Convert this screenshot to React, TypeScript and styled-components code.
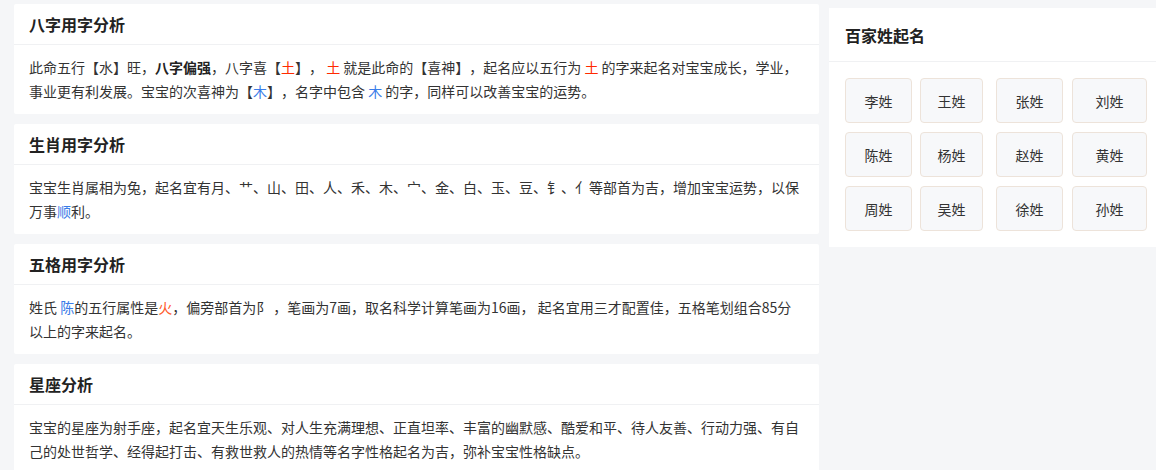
import React from 'react';
import styled, { createGlobalStyle } from 'styled-components';

const GlobalStyle = createGlobalStyle`
  html, body {
    margin: 0;
    padding: 0;
    overflow: hidden;
    background: #f5f6f8;
  }
  body {
    font-family: "Noto Sans CJK SC", "Noto Sans", sans-serif;
    color: #333;
    text-spacing-trim: space-all;
  }
`;

type Tone = 'red' | 'blue' | 'orange';

const toneColors: Record<Tone, string> = {
  red: '#ff2a00',
  blue: '#3a7ce8',
  orange: '#ff5a2c',
};

const surnames = [
  '李姓', '王姓', '张姓', '刘姓',
  '陈姓', '杨姓', '赵姓', '黄姓',
  '周姓', '吴姓', '徐姓', '孙姓',
];

const columnWidths = [67, 63, 67, 75];

const App = (): JSX.Element => (
  <Page>
    <GlobalStyle />
    <MainColumn>
      <Card>
        <CardHeader>八字用字分析</CardHeader>
        <CardBody>
          此命五行【水】旺，<Strong>八字偏强</Strong>，八字喜【<Hl tone="red">土</Hl>】，
          <Hl tone="red"> 土 </Hl>就是此命的【喜神】，起名应以五行为<Hl tone="red"> 土 </Hl>
          的字来起名对宝宝成长，学业，事业更有利发展。宝宝的次喜神为【<Hl tone="blue">木</Hl>】，名字中包含
          <Hl tone="blue"> 木 </Hl>的字，同样可以改善宝宝的运势。
        </CardBody>
      </Card>

      <Card>
        <CardHeader>生肖用字分析</CardHeader>
        <CardBody>
          宝宝生肖属相为兔，起名宜有月、艹、山、田、人、禾、木、宀、金、白、玉、豆、钅、亻等部首为吉，增加宝宝运势，以保万事<Hl tone="blue">顺</Hl>利。
        </CardBody>
      </Card>

      <Card>
        <CardHeader>五格用字分析</CardHeader>
        <CardBody>
          姓氏 <Hl tone="blue">陈</Hl>的五行属性是<Hl tone="orange">火</Hl>，偏旁部首为阝 ，笔画为7画，取名科学计算笔画为16画，
          起名宜用三才配置佳，五格笔划组合85分以上的字来起名。
        </CardBody>
      </Card>

      <Card>
        <CardHeader>星座分析</CardHeader>
        <CardBody>
          宝宝的星座为射手座，起名宜天生乐观、对人生充满理想、正直坦率、丰富的幽默感、酷爱和平、待人友善、行动力强、有自己的处世哲学、经得起打击、有救世救人的热情等名字性格起名为吉，弥补宝宝性格缺点。
        </CardBody>
      </Card>
    </MainColumn>

    <SideCard>
      <SideHeader>百家姓起名</SideHeader>
      <SurnameGrid>
        {surnames.map((name, i) => (
          <SurnameButton key={name} $width={columnWidths[i % 4]}>
            {name}
          </SurnameButton>
        ))}
      </SurnameGrid>
    </SideCard>
  </Page>
);

const Page = styled.div`
  display: flex;
  align-items: flex-start;
  gap: 10px;
  padding: 4px 0 0 14px;
  width: 1200px;
`;

const MainColumn = styled.div`
  display: flex;
  flex-direction: column;
  gap: 10px;
  width: 805px;
  flex-shrink: 0;
`;

const Card = styled.section`
  background: #fff;
  border-radius: 2px;
`;

const CardHeader = styled.h3`
  margin: 0;
  height: 40px;
  padding: 0 15px;
  display: flex;
  align-items: center;
  font-size: 16px;
  font-weight: 700;
  color: #222;
  border-bottom: 1px solid #f0f1f3;
`;

const CardBody = styled.p`
  margin: 0;
  padding: 10px 15px 11px;
  font-size: 14px;
  line-height: 24px;
  color: #333;
`;

const Strong = styled.b`
  font-weight: 700;
  color: #222;
`;

const Hl = styled.span<{ tone: Tone }>`
  color: ${({ tone }) => toneColors[tone]};
`;

const SideCard = styled.aside`
  margin-top: 4px;
  width: 340px;
  flex-shrink: 0;
  background: #fff;
  padding-bottom: 16px;
`;

const SideHeader = styled.h3`
  margin: 0;
  height: 53px;
  padding: 0 16px;
  display: flex;
  align-items: center;
  font-size: 16px;
  font-weight: 600;
  color: #222;
  border-bottom: 1px solid #f0f1f3;
`;

const SurnameGrid = styled.div`
  display: grid;
  grid-template-columns: 75px 76px 76px 76px;
  row-gap: 9px;
  padding: 16px 16px 0;
`;

const SurnameButton = styled.div<{ $width: number }>`
  box-sizing: border-box;
  width: ${({ $width }) => $width}px;
  height: 45px;
  display: flex;
  align-items: center;
  justify-content: center;
  background: #f7f8fa;
  border: 1px solid #ede3da;
  border-radius: 4px;
  font-size: 14px;
  color: #333;
  cursor: pointer;
`;

export default App;
